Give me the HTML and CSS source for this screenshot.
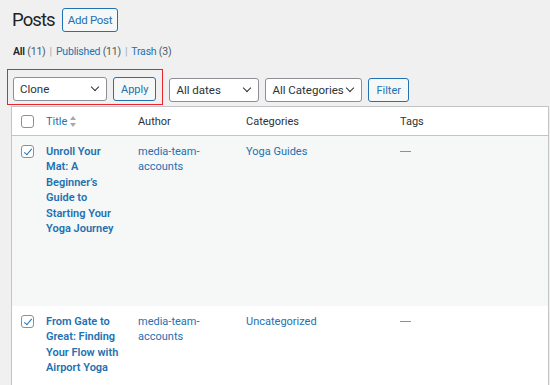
FILE: index.html
```html
<!DOCTYPE html>
<html lang="en">
<head>
    <meta charset="UTF-8">
    <meta name="viewport" content="width=device-width, initial-scale=1.0">
    <title>Posts</title>
    <link rel="stylesheet" href="styles.css">
</head>
<body>
    <div class="wrap">
        <div class="page-head">
            <h1>Posts</h1>
            <a class="button" href="#">Add Post</a>
        </div>
        <ul class="subsubsub">
            <li class="current">All <span class="count">(11)</span></li>
            <li class="sep">|</li>
            <li><a href="#">Published <span class="count">(11)</span></a></li>
            <li class="sep">|</li>
            <li><a href="#">Trash <span class="count">(3)</span></a></li>
        </ul>

        <div class="tablenav">
            <div class="bulk-actions">
                <div class="select wide">Clone <span class="chevron"></span></div>
                <a class="button" href="#">Apply</a>
            </div>
            <div class="filters">
                <div class="select dates">All dates <span class="chevron"></span></div>
                <div class="select cats">All Categories <span class="chevron"></span></div>
                <a class="button" href="#">Filter</a>
            </div>
        </div>

        <table class="posts">
            <thead>
                <tr>
                    <th class="col-cb"><span class="checkbox"></span></th>
                    <th class="col-title"><a href="#">Title</a> <span class="sort"></span></th>
                    <th class="col-author">Author</th>
                    <th class="col-cats">Categories</th>
                    <th class="col-tags">Tags</th>
                </tr>
            </thead>
            <tbody>
                <tr class="alt first">
                    <td class="col-cb"><span class="checkbox checked"></span></td>
                    <td class="col-title"><a href="#">Unroll Your Mat: A Beginner’s Guide to Starting Your Yoga Journey</a></td>
                    <td class="col-author"><a href="#">media-team-accounts</a></td>
                    <td class="col-cats"><a href="#">Yoga Guides</a></td>
                    <td class="col-tags"><span class="dash"></span></td>
                </tr>
                <tr>
                    <td class="col-cb"><span class="checkbox checked"></span></td>
                    <td class="col-title"><a href="#">From Gate to Great: Finding Your Flow with Airport Yoga</a></td>
                    <td class="col-author"><a href="#">media-team-accounts</a></td>
                    <td class="col-cats"><a href="#">Uncategorized</a></td>
                    <td class="col-tags"><span class="dash"></span></td>
                </tr>
            </tbody>
        </table>
    </div>
</body>
</html>
```

FILE: styles.css
```css
body {
    margin: 0;
    background-color: #f0f0f1;
    font-family: Roboto, Arial, sans-serif;
    font-size: 11px;
    color: #3c434a;
}
a {
    color: #2271b1;
    text-decoration: none;
}
.wrap {
    padding: 8px 1px 0 11px;
}
.page-head {
    display: flex;
    align-items: center;
    gap: 7px;
    height: 24px;
}
h1 {
    margin: 0 0 0 1px;
    font-size: 18.5px;
    font-weight: 400;
    letter-spacing: -0.9px;
    color: #1d2327;
}
.button {
    display: inline-flex;
    align-items: center;
    height: 22px;
    padding: 0 7px;
    border: 1px solid #2271b1;
    border-radius: 3px;
    background-color: #f6f7f7;
    color: #2271b1;
    font-size: 11px;
}
.page-head .button {
    padding: 0 5px;
    font-size: 11.5px;
    letter-spacing: -0.3px;
}
.subsubsub {
    list-style: none;
    margin: 11px 0 0 2px;
    padding: 0;
    display: flex;
    gap: 4px;
    height: 16px;
    align-items: center;
    font-size: 10.5px;
    letter-spacing: -0.2px;
}
.subsubsub .current {
    font-weight: 600;
    color: #1d2327;
}
.subsubsub .count {
    font-weight: 400;
    color: #50575e;
}
.subsubsub .sep {
    color: #a7aaad;
}
.tablenav {
    display: flex;
    align-items: center;
    gap: 6px;
    margin: 10px 0 0 -4px;
}
.bulk-actions {
    display: flex;
    gap: 6px;
    padding: 7px 6px 3px 5px;
    border: 1.5px solid #e8232a;
}
.filters {
    display: flex;
    gap: 6px;
    padding-top: 6px;
}
.select {
    display: flex;
    align-items: center;
    justify-content: space-between;
    height: 24px;
    box-sizing: border-box;
    padding: 0 8px 0 6px;
    border: 1px solid #8c8f94;
    border-radius: 3px;
    background-color: #fff;
    color: #2c3338;
    font-size: 11.5px;
    white-space: nowrap;
}
.select.wide { width: 94px; }
.select.dates { width: 90px; }
.select.cats { width: 97px; }
.chevron {
    width: 5px;
    height: 5px;
    border-right: 1.5px solid #2c3338;
    border-bottom: 1.5px solid #2c3338;
    transform: rotate(45deg);
    margin-top: -4px;
}
.posts {
    width: 538px;
    border-collapse: collapse;
    border: 1px solid #c3c4c7;
    background-color: #fff;
    margin-top: 1px;
    table-layout: fixed;
}
.posts th {
    height: 28px;
    text-align: left;
    font-weight: 400;
    color: #2c3338;
    border-bottom: 1px solid #c3c4c7;
    padding: 0 8px;
    font-size: 11px;
}
.posts td {
    vertical-align: top;
    padding: 8px 8px 0 8px;
    line-height: 15.4px;
}
.posts tr.first td { height: 161px; }
.posts tbody tr:last-child td { height: 70px; padding-top: 8px; }
.posts .alt { background-color: #f6f7f7; }
.col-cb { width: 11px; }
.posts .col-cb { padding-left: 9px; padding-right: 6px; }
.posts td.col-cb { padding-top: 9px; }
.posts tbody tr:last-child td.col-cb { padding-top: 9px; }
.col-title { width: 76px; }
.col-author { width: 92px; }
.col-cats { width: 138px; }
.col-title a {
    font-weight: 600;
}
.posts th.col-title a { font-weight: 400; }
.checkbox {
    display: block;
    width: 11px;
    height: 11px;
    border: 1px solid #8c8f94;
    border-radius: 3px;
    background-color: #fff;
    position: relative;
}
.checkbox.checked::after {
    content: "";
    position: absolute;
    left: 3.5px;
    top: 0.5px;
    width: 3px;
    height: 7px;
    border-right: 1.8px solid #2271b1;
    border-bottom: 1.8px solid #2271b1;
    transform: rotate(40deg);
}
.sort {
    display: inline-block;
    width: 6px;
    height: 11px;
    vertical-align: middle;
    position: relative;
}
.sort::before, .sort::after {
    content: "";
    position: absolute;
    left: 0;
    border-left: 3px solid transparent;
    border-right: 3px solid transparent;
}
.sort::before {
    top: 0;
    border-bottom: 4px solid #a7aaad;
}
.sort::after {
    bottom: 0;
    border-top: 4px solid #a7aaad;
}
.dash {
    display: block;
    width: 11px;
    height: 1px;
    margin-top: 7px;
    background-color: #8c8f94;
}
```
